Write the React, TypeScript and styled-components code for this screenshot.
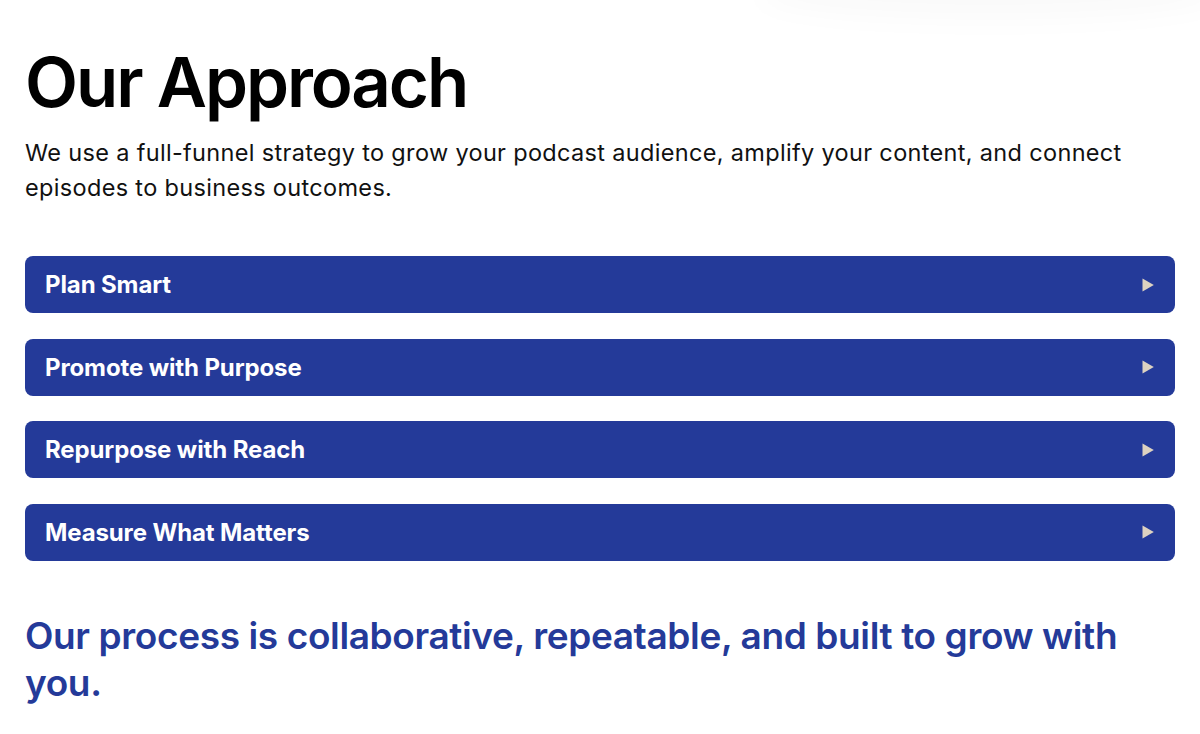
import React from "react";
import styled, { createGlobalStyle } from "styled-components";

const GlobalStyle = createGlobalStyle`
  html, body {
    margin: 0;
    padding: 0;
    background: #ffffff;
  }
  body {
    font-family: Inter, "Noto Sans", "Liberation Sans", sans-serif;
    -webkit-font-smoothing: antialiased;
  }
  * { box-sizing: border-box; }
`;

const Page = styled.main`
  position: relative;
  min-height: 734px;
  padding: 44px 25px 40px;
  overflow: hidden;
`;

const HeaderShade = styled.div`
  position: absolute;
  top: -30px;
  right: -20px;
  width: 460px;
  height: 50px;
  border-radius: 50%;
  background: rgba(0, 0, 0, 0.018);
  filter: blur(12px);
  pointer-events: none;
`;

const Title = styled.h1`
  margin: 0;
  font-size: 69px;
  line-height: 77px;
  font-weight: 600;
  letter-spacing: -0.03em;
  color: #000;
`;

const Lead = styled.p`
  margin: 14px 0 0;
  font-size: 23.5px;
  line-height: 35px;
  font-weight: 400;
  letter-spacing: 0.014em;
  color: #111;
`;

const Accordion = styled.div`
  display: flex;
  flex-direction: column;
  gap: 25.5px;
  margin-top: 51px;
`;

const Item = styled.button`
  display: flex;
  align-items: center;
  justify-content: space-between;
  width: 100%;
  height: 57px;
  padding: 0 21px 0 20px;
  border: none;
  border-radius: 8px;
  background: #243a99;
  color: #fff;
  font-family: inherit;
  font-size: 24px;
  font-weight: 700;
  letter-spacing: -0.005em;
  text-align: left;
  cursor: pointer;
`;

const Arrow = styled.svg`
  display: block;
  width: 12px;
  height: 14px;
  flex: 0 0 12px;
  fill: #ddd2c1;
`;

const Closing = styled.p`
  margin: 51px 0 0;
  max-width: 1120px;
  font-size: 37px;
  line-height: 47px;
  font-weight: 600;
  letter-spacing: -0.01em;
  color: #243a99;
`;

const steps = [
  "Plan Smart",
  "Promote with Purpose",
  "Repurpose with Reach",
  "Measure What Matters",
];

export default function App() {
  return (
    <>
      <GlobalStyle />
      <Page>
        <HeaderShade />
        <Title>Our Approach</Title>
        <Lead>
          We use a full-funnel strategy to grow your podcast audience, amplify
          your content, and connect episodes to business outcomes.
        </Lead>
        <Accordion>
          {steps.map((s) => (
            <Item key={s}>
              {s}
              <Arrow viewBox="0 0 12 14" aria-hidden="true">
                <path d="M0.5 0.5 L11.8 7 L0.5 13.5 Z" />
              </Arrow>
            </Item>
          ))}
        </Accordion>
        <Closing>
          Our process is collaborative, repeatable, and built to grow with you.
        </Closing>
      </Page>
    </>
  );
}
